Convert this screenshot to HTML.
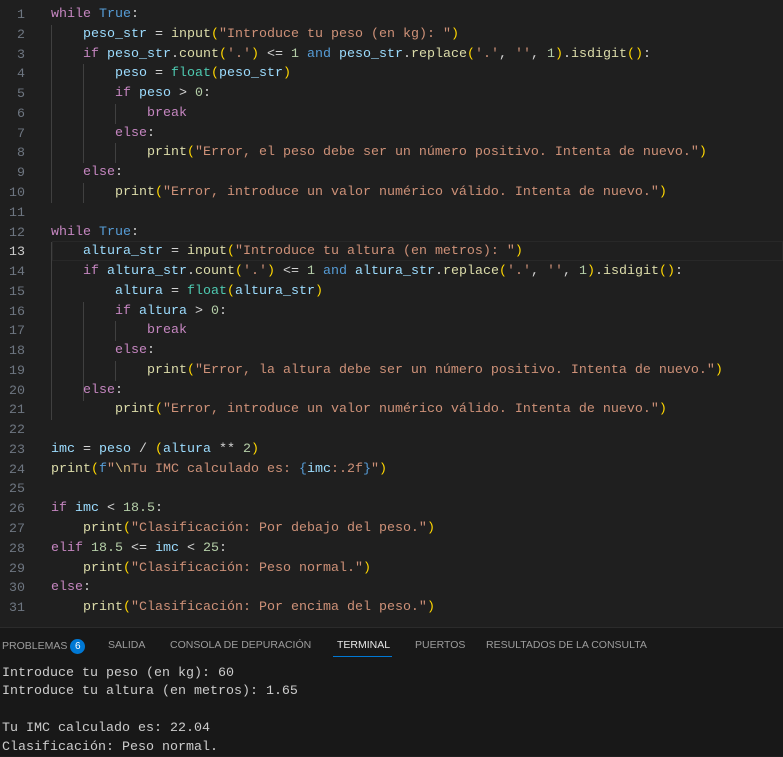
<!DOCTYPE html>
<html><head><meta charset="utf-8"><style>
body{margin:0;width:783px;height:755px;background:#1f1f1f;overflow:hidden;font-family:"Liberation Mono",monospace;}
#ed{position:absolute;left:0;top:0;width:783px;height:627px;background:#1f1f1f;}
.ln{position:absolute;left:0;width:25px;text-align:right;color:#6e7681;font-size:13.3px;height:19.77px;line-height:19.77px;}
.cl{position:absolute;left:51px;white-space:pre;font-size:13.33px;color:#d4d4d4;height:19.77px;line-height:19.77px;}
.k{color:#c586c0}.b{color:#569cd6}.v{color:#9cdcfe}.f{color:#dcdcaa}.c{color:#4ec9b0}.s{color:#ce9178}.n{color:#b5cea8}
.y{color:#ffd700}.p{color:#da70d6}.e{color:#179fff}
.g{position:absolute;width:1px;background:#404040;}
#cur{position:absolute;left:52px;right:0;top:241px;height:18px;border:1px solid #282828;}
#panel{position:absolute;left:0;top:627px;width:783px;height:128px;background:#181818;border-top:1px solid #2b2b2b;}
.tab{position:absolute;top:11px;font-family:"Liberation Sans",sans-serif;font-size:10.5px;color:#9d9d9d;}
.term{position:absolute;left:2px;white-space:pre;font-size:13.33px;color:#cccccc;line-height:18.4px;}
</style></head><body>
<div id="ed">
<div id="cur"></div>
<div class="g" style="left:51px;top:25px;height:178px"></div>
<div class="g" style="left:83px;top:64px;height:99px"></div>
<div class="g" style="left:115px;top:104px;height:20px"></div>
<div class="g" style="left:115px;top:143px;height:20px"></div>
<div class="g" style="left:83px;top:183px;height:20px"></div>
<div class="g" style="left:51px;top:242px;height:178px"></div>
<div class="g" style="left:83px;top:302px;height:99px"></div>
<div class="g" style="left:115px;top:321px;height:20px"></div>
<div class="g" style="left:115px;top:361px;height:20px"></div>

<div class="ln" style="top:5px">1</div><div class="cl" style="top:5px"><span class="k">while</span> <span class="b">True</span>:</div>
<div class="ln" style="top:24.8px">2</div><div class="cl" style="top:24.8px">    <span class="v">peso_str</span> = <span class="f">input</span><span class="y">(</span><span class="s">"Introduce tu peso (en kg): "</span><span class="y">)</span></div>
<div class="ln" style="top:44.5px">3</div><div class="cl" style="top:44.5px">    <span class="k">if</span> <span class="v">peso_str</span>.<span class="f">count</span><span class="y">(</span><span class="s">'.'</span><span class="y">)</span> &lt;= <span class="n">1</span> <span class="b">and</span> <span class="v">peso_str</span>.<span class="f">replace</span><span class="y">(</span><span class="s">'.'</span>, <span class="s">''</span>, <span class="n">1</span><span class="y">)</span>.<span class="f">isdigit</span><span class="y">()</span>:</div>
<div class="ln" style="top:64.3px">4</div><div class="cl" style="top:64.3px">        <span class="v">peso</span> = <span class="c">float</span><span class="y">(</span><span class="v">peso_str</span><span class="y">)</span></div>
<div class="ln" style="top:84.1px">5</div><div class="cl" style="top:84.1px">        <span class="k">if</span> <span class="v">peso</span> &gt; <span class="n">0</span>:</div>
<div class="ln" style="top:103.9px">6</div><div class="cl" style="top:103.9px">            <span class="k">break</span></div>
<div class="ln" style="top:123.6px">7</div><div class="cl" style="top:123.6px">        <span class="k">else</span>:</div>
<div class="ln" style="top:143.4px">8</div><div class="cl" style="top:143.4px">            <span class="f">print</span><span class="y">(</span><span class="s">"Error, el peso debe ser un número positivo. Intenta de nuevo."</span><span class="y">)</span></div>
<div class="ln" style="top:163.2px">9</div><div class="cl" style="top:163.2px">    <span class="k">else</span>:</div>
<div class="ln" style="top:182.9px">10</div><div class="cl" style="top:182.9px">        <span class="f">print</span><span class="y">(</span><span class="s">"Error, introduce un valor numérico válido. Intenta de nuevo."</span><span class="y">)</span></div>
<div class="ln" style="top:202.7px">11</div>
<div class="ln" style="top:222.5px">12</div><div class="cl" style="top:222.5px"><span class="k">while</span> <span class="b">True</span>:</div>
<div class="ln" style="top:242.2px;color:#cccccc">13</div><div class="cl" style="top:242.2px">    <span class="v">altura_str</span> = <span class="f">input</span><span class="y">(</span><span class="s">"Introduce tu altura (en metros): "</span><span class="y">)</span></div>
<div class="ln" style="top:262px">14</div><div class="cl" style="top:262px">    <span class="k">if</span> <span class="v">altura_str</span>.<span class="f">count</span><span class="y">(</span><span class="s">'.'</span><span class="y">)</span> &lt;= <span class="n">1</span> <span class="b">and</span> <span class="v">altura_str</span>.<span class="f">replace</span><span class="y">(</span><span class="s">'.'</span>, <span class="s">''</span>, <span class="n">1</span><span class="y">)</span>.<span class="f">isdigit</span><span class="y">()</span>:</div>
<div class="ln" style="top:281.8px">15</div><div class="cl" style="top:281.8px">        <span class="v">altura</span> = <span class="c">float</span><span class="y">(</span><span class="v">altura_str</span><span class="y">)</span></div>
<div class="ln" style="top:301.5px">16</div><div class="cl" style="top:301.5px">        <span class="k">if</span> <span class="v">altura</span> &gt; <span class="n">0</span>:</div>
<div class="ln" style="top:321.3px">17</div><div class="cl" style="top:321.3px">            <span class="k">break</span></div>
<div class="ln" style="top:341.1px">18</div><div class="cl" style="top:341.1px">        <span class="k">else</span>:</div>
<div class="ln" style="top:360.8px">19</div><div class="cl" style="top:360.8px">            <span class="f">print</span><span class="y">(</span><span class="s">"Error, la altura debe ser un número positivo. Intenta de nuevo."</span><span class="y">)</span></div>
<div class="ln" style="top:380.6px">20</div><div class="cl" style="top:380.6px">    <span class="k">else</span>:</div>
<div class="ln" style="top:400.4px">21</div><div class="cl" style="top:400.4px">        <span class="f">print</span><span class="y">(</span><span class="s">"Error, introduce un valor numérico válido. Intenta de nuevo."</span><span class="y">)</span></div>
<div class="ln" style="top:420.1px">22</div>
<div class="ln" style="top:439.9px">23</div><div class="cl" style="top:439.9px"><span class="v">imc</span> = <span class="v">peso</span> / <span class="y">(</span><span class="v">altura</span> ** <span class="n">2</span><span class="y">)</span></div>
<div class="ln" style="top:459.7px">24</div><div class="cl" style="top:459.7px"><span class="f">print</span><span class="y">(</span><span class="b">f</span><span class="s">"</span><span style="color:#d7ba7d">\n</span><span class="s">Tu IMC calculado es: </span><span class="b">{</span><span class="v">imc</span><span class="s">:.2f</span><span class="b">}</span><span class="s">"</span><span class="y">)</span></div>
<div class="ln" style="top:479.4px">25</div>
<div class="ln" style="top:499.2px">26</div><div class="cl" style="top:499.2px"><span class="k">if</span> <span class="v">imc</span> &lt; <span class="n">18.5</span>:</div>
<div class="ln" style="top:519px">27</div><div class="cl" style="top:519px">    <span class="f">print</span><span class="y">(</span><span class="s">"Clasificación: Por debajo del peso."</span><span class="y">)</span></div>
<div class="ln" style="top:538.7px">28</div><div class="cl" style="top:538.7px"><span class="k">elif</span> <span class="n">18.5</span> &lt;= <span class="v">imc</span> &lt; <span class="n">25</span>:</div>
<div class="ln" style="top:558.5px">29</div><div class="cl" style="top:558.5px">    <span class="f">print</span><span class="y">(</span><span class="s">"Clasificación: Peso normal."</span><span class="y">)</span></div>
<div class="ln" style="top:578.3px">30</div><div class="cl" style="top:578.3px"><span class="k">else</span>:</div>
<div class="ln" style="top:598px">31</div><div class="cl" style="top:598px">    <span class="f">print</span><span class="y">(</span><span class="s">"Clasificación: Por encima del peso."</span><span class="y">)</span></div>
</div>
<div id="panel">
<div class="tab" style="left:2px">PROBLEMAS <span style="display:inline-block;width:15px;height:15px;border-radius:50%;background:#0078d4;color:#fff;text-align:center;line-height:15px;font-size:10px;">6</span></div>
<div class="tab" style="left:108px">SALIDA</div>
<div class="tab" style="left:170px">CONSOLA DE DEPURACIÓN</div>
<div class="tab" style="left:337px;color:#e7e7e7">TERMINAL</div>
<div style="position:absolute;left:333px;top:28px;width:59px;height:1px;background:#0078d4"></div>
<div class="tab" style="left:415px">PUERTOS</div>
<div class="tab" style="left:486px">RESULTADOS DE LA CONSULTA</div>
<div class="term" style="top:37px">Introduce tu peso (en kg): 60
Introduce tu altura (en metros): 1.65

Tu IMC calculado es: 22.04
Clasificación: Peso normal.</div>
</div>
</body></html>
